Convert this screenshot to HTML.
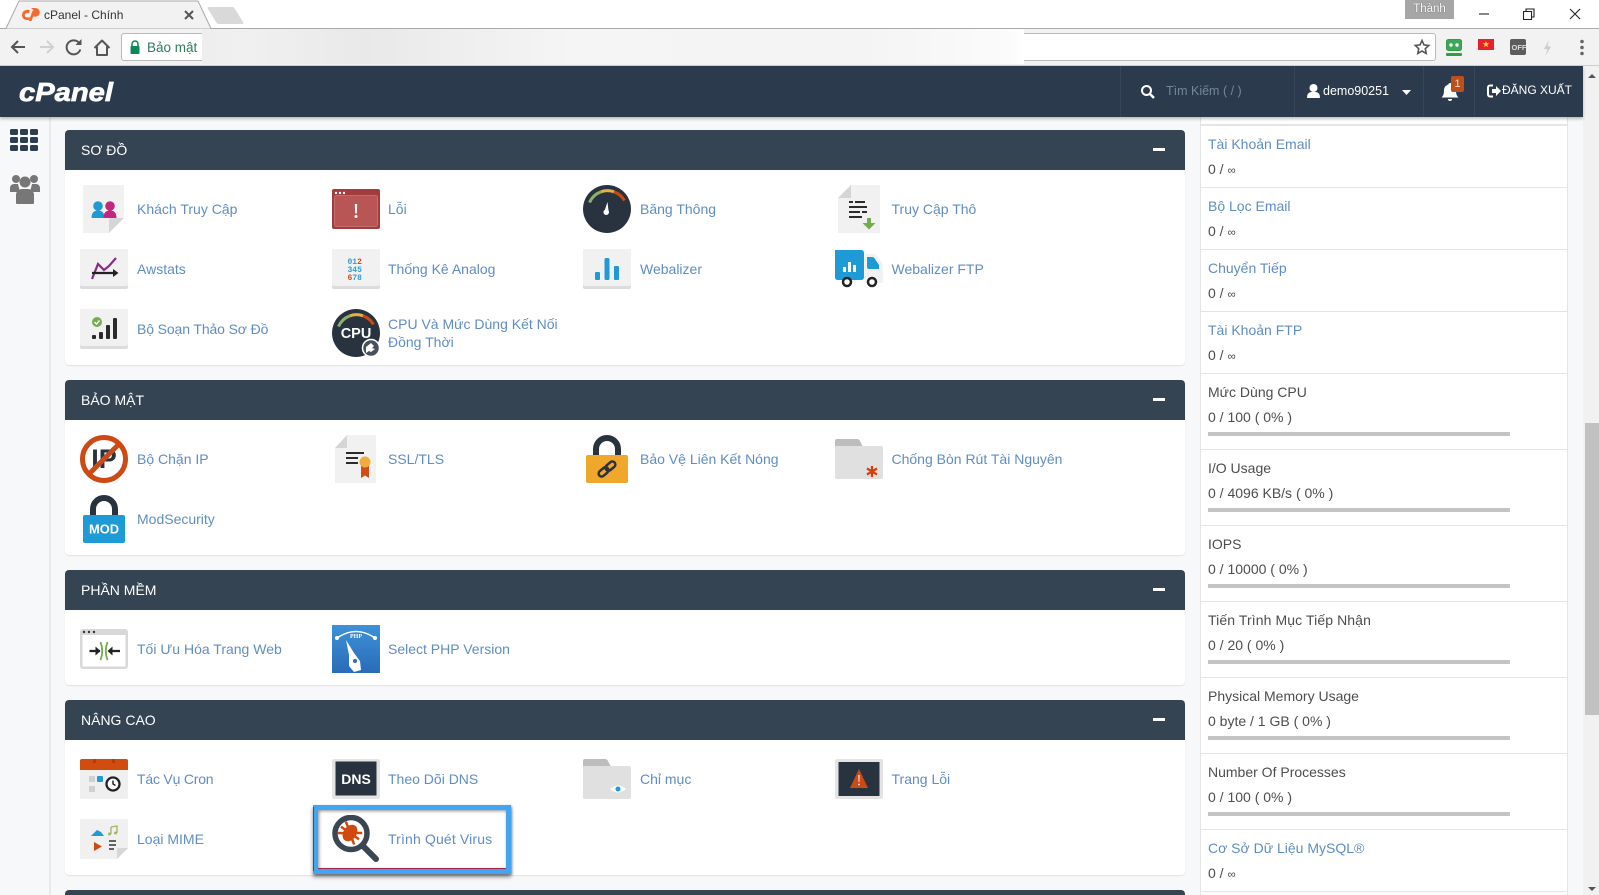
<!DOCTYPE html>
<html lang="vi"><head><meta charset="utf-8"><title>cPanel - Chính</title>
<style>
html,body{margin:0;padding:0;width:1599px;height:895px;overflow:hidden;background:#f7f8f9;font-family:"Liberation Sans","Noto Sans CJK SC",sans-serif;font-size:14px;color:#444}
#w{position:relative;width:1599px;height:895px;overflow:hidden}
.a{position:absolute}
.p{position:absolute;left:65px;width:1119.5px;background:#fff;border-radius:4px;box-shadow:0 1px 1px #dfe1e3}
.h{position:absolute;left:65px;width:1119.5px;height:40px;background:#344452;border-radius:4px 4px 0 0;color:#fff;line-height:40px;text-indent:16px;font-size:14px}
.m{position:absolute;left:1153px;width:12px;height:3px;background:#fff}
.t{position:absolute;color:#5f8dc3;line-height:20px;white-space:nowrap}
.i{position:absolute;width:48px;height:48px;display:block}
.l{position:absolute;left:1208px;line-height:20px;white-space:nowrap;color:#4d4d4d}
.l s{text-decoration:none;font-size:11.500px}
.k{color:#5f8dc3}
.b{position:absolute;left:1208px;width:302px;height:4px;background:#c4c4c4}
</style></head><body><div id="w">

<!-- browser chrome -->
<div class="a" style="left:0;top:0;width:1599px;height:29px;background:#fff"></div>
<div class="a" style="left:0;top:28px;width:1599px;height:1px;background:#a9a9a9"></div>
<div class="a" style="left:0;top:29px;width:1599px;height:37px;background:#f2f2f2;border-bottom:1px solid #cfcfcf;box-sizing:border-box"></div>
<svg class="a" style="left:0;top:0" width="250" height="30">
<path d="M0 28.500H6L19 1H198L211 28.500" fill="#f2f2f2" stroke="#a9a9a9" stroke-width="1"/>
<path d="M209 7h23q2 0 3 2l8 13q1 2-1 2h-23q-2 0-3-2l-8-13q-1-2 1-2z" fill="#d9d9d9"/>
<g fill="#f26b2e"><path d="M30 10.500a5 5 0 0 0-4-.5 5.200 5.200 0 0 0-4 5 4.800 4.800 0 0 0 5 5h2l1-2.600h-3a2.200 2.200 0 0 1 0-4.400h2z"/><path d="M31 8h4.500a4.300 4.300 0 0 1 0 8.600H33l-1.500 4.400h-2.800l4-10.500h2.800a1.700 1.700 0 0 1 0 3.400h-2l1-2.900z"/></g>
<path d="M185 11l8 8M193 11l-8 8" stroke="#555" stroke-width="2" fill="none"/>
</svg>
<div class="a" style="left:44px;top:8px;font-size:12px;line-height:15px;color:#333">cPanel - Chính</div>

<svg class="a" style="left:0;top:29px" width="125" height="37" fill="none">
<path d="M25 18H13M18 12l-6 6 6 6" stroke="#555" stroke-width="2"/>
<path d="M40 18h12M47 12l6 6-6 6" stroke="#d0d0d0" stroke-width="2"/>
<path d="M79.500 14.500a7 7 0 1 0 .8 6" stroke="#555" stroke-width="2"/><path d="M81.500 10v6h-6z" fill="#555"/>
<path d="M94.500 19L102 11.500 109.500 19M97 17.500V26h10v-8.500" stroke="#555" stroke-width="2" stroke-linejoin="round"/>
</svg>
<div class="a" style="left:121px;top:33px;width:1315px;height:28px;background:#fff;border:1px solid #b9b9b9;border-radius:3px;box-sizing:border-box"></div>
<svg class="a" style="left:129px;top:40px" width="12" height="14"><path d="M3 6V4a3 3 0 0 1 6 0v2" stroke="#0b8a55" stroke-width="1.500" fill="none"/><rect x="1.500" y="6" width="9" height="8" rx="1" fill="#0b8a55"/></svg>
<div class="a" style="left:147px;top:39px;font-size:13.500px;line-height:17px;color:#2e7d5b">Bảo mật</div>
<div class="a" style="left:202px;top:29px;width:822px;height:35px;background:linear-gradient(90deg,#eee 0,#f0f0f0 5%,#e9e9e9 20%,#f5f5f5 45%,#f4f4f4 80%,#fbfbfb 98%,#fff 100%)"></div>
<svg class="a" style="left:1412px;top:37px" width="20" height="20"><path d="M10 3.500l2 4.400 4.700.6-3.400 3.200.9 4.800L10 14.100l-4.200 2.400.9-4.800L3.300 8.500 8 7.900z" fill="none" stroke="#555" stroke-width="1.600"/></svg>
<svg class="a" style="left:1445px;top:38px" width="140" height="20">
<rect x="1.500" y="1.500" width="15" height="11" rx="2" fill="#3aa856" stroke="#2f9e44"/><rect x="1" y="15" width="16" height="3" rx="1" fill="#2f9e44"/><circle cx="6" cy="7" r="1.700" fill="#fff"/><circle cx="12" cy="7" r="1.700" fill="#fff"/>
<rect x="33" y="1" width="16" height="11" fill="#e8202a"/><path d="M41 3l.9 2.300h2.300l-1.900 1.500.7 2.300-2-1.400-2 1.400.7-2.300-1.900-1.500h2.300z" fill="#ffdc3d"/>
<rect x="65" y="1" width="16" height="16" rx="2" fill="#5c5c5c"/><text x="66.500" y="12" font-size="7.500" font-weight="700" fill="#ddd" font-family="Liberation Sans">OFF</text>
<path d="M104 2l-5 9h3.500l-2 7 5.500-9.500h-3.500z" fill="#ccc"/>
<g fill="#666"><circle cx="137" cy="3.500" r="1.800"/><circle cx="137" cy="9.500" r="1.800"/><circle cx="137" cy="15.500" r="1.800"/></g>
</svg>
<div class="a" style="left:1405px;top:0;width:49px;height:19px;background:#a6a6a6;color:#fff;font-size:11.500px;line-height:18px;text-align:center;text-shadow:0 0 1px #444">Thành</div>
<svg class="a" style="left:1478px;top:6px" width="110" height="16" fill="none" stroke="#222" stroke-width="1.100">
<path d="M1 8h10"/><path d="M45.500 5.500h8v8h-8zM48 5.500V3h8v8h-2.500"/><path d="M92 3l10 10M102 3L92 13"/>
</svg>

<!-- main background -->
<div class="a" style="left:0;top:117px;width:49px;height:778px;background:#f7f8f9;border-right:2px solid #e9eaeb"></div>
<svg class="a" style="left:9px;top:128px" width="32" height="78">
<g fill="#2c3e50"><rect x="1" y="1" width="8" height="6" rx="1.500"/><rect x="11" y="1" width="8" height="6" rx="1.500"/><rect x="21" y="1" width="8" height="6" rx="1.500"/><rect x="1" y="9" width="8" height="6" rx="1.500"/><rect x="11" y="9" width="8" height="6" rx="1.500"/><rect x="21" y="9" width="8" height="6" rx="1.500"/><rect x="1" y="17" width="8" height="6" rx="1.500"/><rect x="11" y="17" width="8" height="6" rx="1.500"/><rect x="21" y="17" width="8" height="6" rx="1.500"/></g>
<g fill="#777"><circle cx="7" cy="51" r="4"/><circle cx="25" cy="51" r="4"/><path d="M1 64v-4a4 4 0 0 1 4-4h4l2 8zM31 64v-4a4 4 0 0 0-4-4h-4l-2 8z"/><circle cx="16" cy="54" r="5.500"/><path d="M7 75v-8a6 6 0 0 1 6-6h6a6 6 0 0 1 6 6v8q0 1-1 1H8q-1 0-1-1z"/></g>
</svg>

<!-- panels -->
<div class="p" style="top:130px;height:235px"></div>
<div class="h" style="top:130px">SƠ ĐỒ</div><div class="m" style="top:148px"></div>
<div class="p" style="top:380px;height:175px"></div>
<div class="h" style="top:380px">BẢO MẬT</div><div class="m" style="top:398px"></div>
<div class="p" style="top:570px;height:115px"></div>
<div class="h" style="top:570px">PHẦN MỀM</div><div class="m" style="top:588px"></div>
<div class="p" style="top:700px;height:175px"></div>
<div class="h" style="top:700px">NÂNG CAO</div><div class="m" style="top:718px"></div>
<div class="h" style="top:890px;height:5px"></div>

<!-- SO DO row 1 -->
<svg class="i" style="left:80px;top:185px" viewBox="0 0 48 48"><path d="M3 0h41v33L29 48H3z" fill="#f1f1f1"/><path d="M44 33H31q-2 0-2 2v13z" fill="#d6d6d6"/><circle cx="18" cy="21" r="4.800" fill="#1e9ad6"/><path d="M11.500 33q0-7.500 6.500-7.500t6.500 7.500z" fill="#1e9ad6"/><circle cx="30" cy="21" r="4.800" fill="#c2267e"/><path d="M23.500 33q0-7.500 6.500-7.500T36.500 33z" fill="#c2267e"/></svg>
<div class="t" style="left:137px;top:199px">Khách Truy Cập</div>
<svg class="i" style="left:332px;top:185px" viewBox="0 0 48 48"><rect y="4" width="48" height="40" rx="2" fill="#a33c3c"/><rect x="2.500" y="10.500" width="43" height="31" rx="2" fill="#b85555" stroke="#c97a7a" stroke-width=".8"/><g fill="#fff"><circle cx="4" cy="8" r="1.200"/><circle cx="8" cy="8" r="1.200"/><circle cx="12" cy="8" r="1.200"/><path d="M22.800 19h2.400l-.4 9.500h-1.600z"/><circle cx="24" cy="31.500" r="1.500"/></g></svg>
<div class="t" style="left:388px;top:199px">Lỗi</div>
<svg class="i" style="left:583px;top:185px" viewBox="0 0 48 48"><circle cx="24" cy="24" r="24" fill="#29333f"/><path d="M6.500 17.500A20 20 0 0 1 18 6.800" fill="none" stroke="#8db06a" stroke-width="3"/><path d="M18 6.800A20 20 0 0 1 31 6.800" fill="none" stroke="#e5b04a" stroke-width="3"/><path d="M31 6.800A20 20 0 0 1 41.500 15.500" fill="none" stroke="#cb4a13" stroke-width="3"/><path d="M24.500 17l1 8.500a2.800 2.800 0 1 1-3.600-.8z" fill="#fff"/></svg>
<div class="t" style="left:640px;top:199px">Băng Thông</div>
<svg class="i" style="left:835px;top:185px" viewBox="0 0 48 48"><path d="M16 0h29v48H3V13z" fill="#f1f1f1"/><path d="M16 0v13H3z" fill="#d5d5d5"/><g fill="#2b2b2b"><rect x="14" y="16" width="4" height="2"/><rect x="20" y="16" width="10" height="2"/><rect x="14" y="21" width="18" height="2"/><rect x="14" y="26" width="11" height="2"/><rect x="27" y="26" width="5" height="2"/><rect x="14" y="31" width="13" height="2"/></g><path d="M32 33h4v5h4.500L34 44.500 27.500 38H32z" fill="#74ad4e"/></svg>
<div class="t" style="left:891.500px;top:199px">Truy Cập Thô</div>

<!-- row 2 -->
<svg class="i" style="left:80px;top:245px" viewBox="0 0 48 48"><rect y="4" width="48" height="40" rx="2" fill="#dcdcdc"/><rect y="4" width="48" height="37" rx="2" fill="#f1f1f1"/><path d="M12 34l6-15 6 6 5-4 7-8" fill="none" stroke="#8c2a8c" stroke-width="2.200"/><path d="M12 28h22" stroke="#222" stroke-width="2.200"/><path d="M33 24l5.500 4-5.500 4z" fill="#222"/></svg>
<div class="t" style="left:137px;top:259px">Awstats</div>
<svg class="i" style="left:332px;top:245px" viewBox="0 0 48 48"><rect y="4" width="48" height="40" rx="2" fill="#dcdcdc"/><rect y="4" width="48" height="37" rx="2" fill="#f1f1f1"/><g font-family="Liberation Mono" font-size="8" font-weight="700"><text x="15.500" y="19" fill="#2a9fd6">01<tspan fill="#cc4a14">2</tspan></text><text x="15.500" y="27" fill="#2a9fd6">345</text><text x="15.500" y="35" fill="#cc4a14">6<tspan fill="#2a9fd6">78</tspan></text></g></svg>
<div class="t" style="left:388px;top:259px">Thống Kê Analog</div>
<svg class="i" style="left:583px;top:245px" viewBox="0 0 48 48"><rect y="4" width="48" height="40" rx="2" fill="#dcdcdc"/><rect y="4" width="48" height="37" rx="2" fill="#f1f1f1"/><g fill="#1f9ad6"><rect x="12" y="27" width="5" height="8" rx="1"/><rect x="21.500" y="13" width="5" height="22" rx="1.500"/><rect x="31" y="21" width="5" height="14" rx="1"/></g></svg>
<div class="t" style="left:640px;top:259px">Webalizer</div>
<svg class="i" style="left:835px;top:245px" viewBox="0 0 48 48"><path d="M30 9h9q2 0 3 2l5 7q1 2 1 4v14q0 2-2 2H30z" fill="#f1f1f1"/><path d="M0 5h26q3 0 3 3v24q0 3-3 3H3q-3 0-3-3z" fill="#1e9ad6"/><path d="M32 12h5q2 0 3 2l4 6v4H34q-2 0-2-2z" fill="#1e9ad6"/><g fill="#fff"><rect x="8" y="22" width="3" height="5"/><rect x="13" y="17" width="3" height="10"/><rect x="18" y="20" width="3" height="7"/></g><g fill="#fff" stroke="#222" stroke-width="2.500"><circle cx="12" cy="37" r="4"/><circle cx="37" cy="37" r="4"/></g></svg>
<div class="t" style="left:891.500px;top:259px">Webalizer FTP</div>

<!-- row 3 -->
<svg class="i" style="left:80px;top:305px" viewBox="0 0 48 48"><rect y="4" width="48" height="40" rx="2" fill="#dcdcdc"/><rect y="4" width="48" height="37" rx="2" fill="#f1f1f1"/><g fill="#2b2b2b"><rect x="12" y="30" width="4" height="4" rx="1"/><rect x="19" y="27" width="4" height="7" rx="1"/><rect x="26" y="20" width="4" height="14" rx="1"/><rect x="33" y="13" width="4" height="21" rx="1"/></g><circle cx="17" cy="17" r="5" fill="#74ad4e"/><path d="M14.500 17l2 2 3-3.500" fill="none" stroke="#fff" stroke-width="1.400"/></svg>
<div class="t" style="left:137px;top:319px;letter-spacing:-.12px">Bộ Soạn Thảo Sơ Đồ</div>
<svg class="i" style="left:332px;top:309px" viewBox="0 0 48 48"><circle cx="24" cy="24" r="24" fill="#29333f"/><path d="M6.500 17.500A20 20 0 0 1 18 6.800" fill="none" stroke="#8db06a" stroke-width="3"/><path d="M18 6.800A20 20 0 0 1 31 6.800" fill="none" stroke="#e5b04a" stroke-width="3"/><path d="M31 6.800A20 20 0 0 1 41.500 15.500" fill="none" stroke="#cb4a13" stroke-width="3"/><text x="24" y="29" text-anchor="middle" font-family="Liberation Sans" font-size="14.500" font-weight="700" fill="#fff">CPU</text><circle cx="39" cy="39" r="8.500" fill="#47515c" stroke="#fff" stroke-width="1.500"/><path d="M34 38l5-4 3 3-2 2 3 1-4 3-2-1-3 2z" fill="#fff"/></svg>
<div class="t" style="left:388px;top:314px">CPU Và Mức Dùng Kết Nối</div>
<div class="t" style="left:388px;top:332px">Đồng Thời</div>

<!-- BAO MAT -->
<svg class="i" style="left:80px;top:435px" viewBox="0 0 48 48"><text x="24" y="33" text-anchor="middle" font-family="Liberation Sans" font-size="27" font-weight="700" fill="#29333f">IP</text><circle cx="24" cy="24" r="21.500" fill="none" stroke="#cc4a14" stroke-width="5"/><path d="M39 9L9 39" stroke="#cc4a14" stroke-width="5"/></svg>
<div class="t" style="left:137px;top:449px">Bộ Chặn IP</div>
<svg class="i" style="left:332px;top:435px" viewBox="0 0 48 48"><path d="M15 0h29v48H3V13z" fill="#f1f1f1"/><path d="M15 0v13H3z" fill="#d5d5d5"/><g fill="#2b2b2b"><rect x="14" y="17" width="18" height="2"/><rect x="14" y="22" width="12" height="2"/><rect x="14" y="27" width="12" height="2"/></g><path d="M29 29v14l4-2.500 4 2.500V29z" fill="#d24c17"/><circle cx="33" cy="27" r="5.500" fill="#f0ad3c"/></svg>
<div class="t" style="left:388px;top:449px">SSL/TLS</div>
<svg class="i" style="left:583px;top:435px" viewBox="0 0 48 48"><path d="M13 22V14a11 11 0 0 1 22 0v8" fill="none" stroke="#29333f" stroke-width="6"/><rect x="3" y="20" width="42" height="28" rx="2" fill="#f0a82b"/><g fill="none" stroke="#29333f" stroke-width="2.500" transform="rotate(-40 24 34)"><rect x="14" y="31" width="11" height="6" rx="3"/><rect x="23" y="31" width="11" height="6" rx="3"/></g></svg>
<div class="t" style="left:640px;top:449px">Bảo Vệ Liên Kết Nóng</div>
<svg class="i" style="left:835px;top:435px" viewBox="0 0 48 48"><path d="M0 6q0-2 2-2h20q2 0 3 2l3 6H0z" fill="#bdbdbd"/><path d="M0 11h46q2 0 2 2v29q0 2-2 2H2q-2 0-2-2z" fill="#e0e0e0"/><path d="M37 31v11M32 33.500l10 6M42 33.500l-10 6" stroke="#d2410f" stroke-width="2.300"/></svg>
<div class="t" style="left:891.500px;top:449px">Chống Bòn Rút Tài Nguyên</div>
<svg class="i" style="left:80px;top:495px" viewBox="0 0 48 48"><path d="M13 22V14a11 11 0 0 1 22 0v8" fill="none" stroke="#29333f" stroke-width="6"/><rect x="3" y="20" width="42" height="28" rx="2" fill="#1e9ad6"/><text x="9" y="38.500" font-family="Liberation Sans" font-size="12.500" font-weight="700" fill="#fff" textLength="30" lengthAdjust="spacingAndGlyphs">MOD</text></svg>
<div class="t" style="left:137px;top:509px">ModSecurity</div>

<!-- PHAN MEM -->
<svg class="i" style="left:80px;top:625px" viewBox="0 0 48 48"><rect y="4" width="48" height="40" rx="3" fill="#d8d8d8"/><rect x="2.500" y="10" width="43" height="31.500" fill="#fff"/><g fill="#333"><circle cx="4" cy="7" r="1.200"/><circle cx="9" cy="7" r="1.200"/><circle cx="14" cy="7" r="1.200"/></g><path d="M9.500 26H20M31 26h9" stroke="#222" stroke-width="2.200"/><path d="M15.500 21.500l5 4.500-5 4.500zM32.500 21.500l-5 4.500 5 4.500z" fill="#222"/><path d="M20.500 17q3.500 9 0 18M27.500 17q-3.500 9 0 18" fill="none" stroke="#74ad4e" stroke-width="1.800"/></svg>
<div class="t" style="left:137px;top:639px">Tối Ưu Hóa Trang Web</div>
<svg class="i" style="left:332px;top:625px" viewBox="0 0 48 48"><defs><linearGradient id="g" x1="0" y1="0" x2="0" y2="1"><stop offset="0" stop-color="#3d92d8"/><stop offset="1" stop-color="#2a6bb8"/></linearGradient></defs><rect width="48" height="48" fill="url(#g)"/><path d="M5 13q19-13 38 0" fill="none" stroke="#fff" stroke-width="1.500"/><circle cx="5" cy="13" r="2" fill="#fff"/><circle cx="43" cy="13" r="2" fill="#fff"/><text x="24" y="13" text-anchor="middle" font-family="Liberation Serif" font-size="6" font-weight="700" fill="#fff">PHP</text><path d="M14 15l8 13 6 8 1 9-7 2-5-6v-11z" fill="#fff"/><circle cx="23" cy="36" r="2" fill="#2a6bb8"/></svg>
<div class="t" style="left:388px;top:639px">Select PHP Version</div>

<!-- NANG CAO -->
<svg class="i" style="left:80px;top:755px" viewBox="0 0 48 48"><rect y="4" width="48" height="40" rx="2" fill="#efefef"/><path d="M0 15V6q0-2 2-2h44q2 0 2 2v9z" fill="#d24c0f"/><g fill="#b23c0a"><rect x="13" y="4" width="3" height="4"/><rect x="32" y="4" width="3" height="4"/></g><g fill="#d0d0d0"><rect x="9" y="21" width="6" height="6"/><rect x="9" y="31" width="6" height="6"/></g><rect x="17" y="21" width="6" height="6" rx="1" fill="#1f9ad6"/><circle cx="33" cy="29" r="6.500" fill="#fff" stroke="#222" stroke-width="2.300"/><path d="M33 25.500V29l2.500 1.500" fill="none" stroke="#222" stroke-width="1.500"/></svg>
<div class="t" style="left:137px;top:769px;letter-spacing:-.2px">Tác Vụ Cron</div>
<svg class="i" style="left:332px;top:755px" viewBox="0 0 48 48"><rect y="4" width="48" height="40" rx="2" fill="#e4e4e4"/><rect x="3.500" y="6.500" width="41" height="34" fill="#29333f"/><text x="24" y="29" text-anchor="middle" font-family="Liberation Sans" font-size="14" font-weight="700" fill="#fff">DNS</text></svg>
<div class="t" style="left:388px;top:769px">Theo Dõi DNS</div>
<svg class="i" style="left:583px;top:755px" viewBox="0 0 48 48"><path d="M0 6q0-2 2-2h20q2 0 3 2l3 6H0z" fill="#bdbdbd"/><path d="M0 11h46q2 0 2 2v29q0 2-2 2H2q-2 0-2-2z" fill="#e0e0e0"/><path d="M27 34q8-7 16 0-8 7-16 0z" fill="#fff"/><circle cx="35" cy="34" r="2.500" fill="#1f9ad6"/></svg>
<div class="t" style="left:640px;top:769px">Chỉ mục</div>
<svg class="i" style="left:835px;top:755px" viewBox="0 0 48 48"><rect y="4" width="48" height="40" rx="2" fill="#e4e4e4"/><rect x="3.500" y="7" width="41" height="34" fill="#29333f"/><path d="M24 14l9 19H15z" fill="#cc4a14"/><path d="M23.400 20h1.200l-.2 7h-.8z" fill="#fff"/><circle cx="24" cy="29.500" r=".9" fill="#fff"/></svg>
<div class="t" style="left:891.500px;top:769px">Trang Lỗi</div>
<svg class="i" style="left:80px;top:815px" viewBox="0 0 48 48"><path d="M0 4h48v29L37 44H2q-2 0-2-2z" fill="#f0f0f0"/><path d="M48 33H39q-2 0-2 2v9z" fill="#d6d6d6"/><path d="M11 21l6-6 4 2 3 4z" fill="#1f9ad6"/><path d="M31 12v7M31 12l6-1v7" fill="none" stroke="#a4b75c" stroke-width="1.300"/><circle cx="29.500" cy="19" r="1.500" fill="#a4b75c"/><circle cx="35.500" cy="18" r="1.500" fill="#a4b75c"/><path d="M14 27l8 4.500-8 4.500z" fill="#cc4a14"/><path d="M29 26h7M29 30h7M29 34h5" stroke="#333" stroke-width="1.500"/></svg>
<div class="t" style="left:137px;top:829px">Loại MIME</div>

<!-- highlight -->
<div class="a" style="left:313px;top:805px;width:198px;height:69px;box-sizing:border-box;border:5px solid #42a5f2;background:transparent;box-shadow:0 3px 4px rgba(0,0,0,.45),1px 1px 2px rgba(0,0,0,.3),inset 1px 1px 3px rgba(0,0,0,.45)"></div>
<div class="a" style="left:313px;top:807px;width:1px;height:64px;background:#a9224a"></div>
<div class="a" style="left:318px;top:868px;width:188px;height:1px;background:#a9224a"></div>
<svg class="i" style="left:332px;top:815px" viewBox="0 0 48 48"><circle cx="19" cy="18.500" r="16" fill="#fff" stroke="#3a4753" stroke-width="5.500"/><path d="M32 32l12 12" stroke="#3a4753" stroke-width="6" stroke-linecap="round"/><g transform="rotate(35 18 18)"><ellipse cx="18" cy="18" rx="6.500" ry="9" fill="#d2490f"/><path d="M8 11l6 4M8 25l6-4M28 11l-6 4M28 25l-6-4M7 18h6M29 18h-6" stroke="#d2490f" stroke-width="2.500"/></g></svg>
<div class="t" style="left:388px;top:829px;letter-spacing:.15px">Trình Quét Virus</div>

<!-- right column -->
<div class="a" style="left:1200px;top:117px;width:368px;height:778px;background:#fff;border:solid #e3e4e5;border-width:0 1px;box-sizing:border-box"></div>
<div class="a" style="left:1200px;top:124px;width:368px;height:2px;background:#e3e4e5"></div>
<div class="a" style="left:1200px;top:186.500px;width:368px;height:1.500px;background:#e3e4e5"></div>
<div class="a" style="left:1200px;top:248.500px;width:368px;height:1.500px;background:#e3e4e5"></div>
<div class="a" style="left:1200px;top:310.500px;width:368px;height:1.500px;background:#e3e4e5"></div>
<div class="a" style="left:1200px;top:372.500px;width:368px;height:1.500px;background:#e3e4e5"></div>
<div class="a" style="left:1200px;top:448.500px;width:368px;height:1.500px;background:#e3e4e5"></div>
<div class="a" style="left:1200px;top:524.500px;width:368px;height:1.500px;background:#e3e4e5"></div>
<div class="a" style="left:1200px;top:600.500px;width:368px;height:1.500px;background:#e3e4e5"></div>
<div class="a" style="left:1200px;top:676.500px;width:368px;height:1.500px;background:#e3e4e5"></div>
<div class="a" style="left:1200px;top:752.500px;width:368px;height:1.500px;background:#e3e4e5"></div>
<div class="a" style="left:1200px;top:828.500px;width:368px;height:1.500px;background:#e3e4e5"></div>
<div class="a" style="left:1200px;top:890.500px;width:368px;height:1.500px;background:#e3e4e5"></div>

<div class="l k" style="top:134px">Tài Khoản Email</div><div class="l" style="top:159px">0 / <s>∞</s></div>
<div class="l k" style="top:196px">Bộ Lọc Email</div><div class="l" style="top:221px">0 / <s>∞</s></div>
<div class="l k" style="top:258px">Chuyển Tiếp</div><div class="l" style="top:283px">0 / <s>∞</s></div>
<div class="l k" style="top:320px">Tài Khoản FTP</div><div class="l" style="top:345px">0 / <s>∞</s></div>
<div class="l" style="top:382px">Mức Dùng CPU</div><div class="l" style="top:407px">0 / 100 ( 0% )</div><div class="b" style="top:432px"></div>
<div class="l" style="top:458px">I/O Usage</div><div class="l" style="top:483px">0 / 4096 KB/s ( 0% )</div><div class="b" style="top:508px"></div>
<div class="l" style="top:534px">IOPS</div><div class="l" style="top:559px">0 / 10000 ( 0% )</div><div class="b" style="top:584px"></div>
<div class="l" style="top:610px;letter-spacing:.1px">Tiến Trình Mục Tiếp Nhận</div><div class="l" style="top:635px">0 / 20 ( 0% )</div><div class="b" style="top:660px"></div>
<div class="l" style="top:686px">Physical Memory Usage</div><div class="l" style="top:711px">0 byte / 1 GB ( 0% )</div><div class="b" style="top:736px"></div>
<div class="l" style="top:762px">Number Of Processes</div><div class="l" style="top:787px">0 / 100 ( 0% )</div><div class="b" style="top:812px"></div>
<div class="l k" style="top:838px">Cơ Sở Dữ Liệu MySQL®</div><div class="l" style="top:863px">0 / <s>∞</s></div>

<!-- scrollbar -->
<div class="a" style="left:1583px;top:66px;width:16px;height:829px;background:#f1f1f1"></div>
<div class="a" style="left:1585px;top:423px;width:14px;height:292px;background:#c1c1c1"></div>
<svg class="a" style="left:1583px;top:66px" width="16" height="829"><path d="M5 12l4-4 4 4z" fill="#555"/><path d="M5 821l4 4 4-4z" fill="#555"/></svg>

<!-- navbar -->
<div class="a" style="left:0;top:66px;width:1583px;height:51px;background:#2b3b4d;box-shadow:0 2px 3px rgba(0,0,0,.25)"></div>
<div class="a" style="left:1120px;top:66px;width:1px;height:51px;background:#354658"></div>
<div class="a" style="left:1294px;top:66px;width:1px;height:51px;background:#354658"></div>
<div class="a" style="left:1423px;top:66px;width:1px;height:51px;background:#354658"></div>
<div class="a" style="left:1474px;top:66px;width:1px;height:51px;background:#354658"></div>
<svg class="a" style="left:18px;top:76px" width="100" height="30"><text x="1" y="25" font-family="Liberation Sans" font-size="26" font-weight="700" font-style="italic" fill="#fff" stroke="#fff" stroke-width=".7" textLength="94" lengthAdjust="spacingAndGlyphs">cPanel</text></svg>
<svg class="a" style="left:1140px;top:84px" width="16" height="16"><circle cx="6.500" cy="6.500" r="4.500" fill="none" stroke="#fff" stroke-width="2"/><path d="M10 10l4 4" stroke="#fff" stroke-width="2.400"/></svg>
<div class="a" style="left:1166px;top:81px;line-height:20px;font-size:12.500px;color:#76869a">Tìm Kiếm ( / )</div>
<svg class="a" style="left:1307px;top:83px" width="14" height="16"><circle cx="6.500" cy="5" r="4" fill="#fff"/><path d="M0 15q0-5.500 4-6h5q4 .5 4 6z" fill="#fff"/></svg>
<div class="a" style="left:1323px;top:81px;line-height:20px;font-size:12.500px;color:#fff">demo90251</div>
<svg class="a" style="left:1402px;top:90px" width="10" height="6"><path d="M0 0h9L4.500 5z" fill="#fff"/></svg>
<svg class="a" style="left:1441px;top:82px" width="18" height="20"><path d="M9 1a1.500 1.500 0 0 1 1.500 1.500c3 .8 4.500 3 4.500 6 0 4 1 5.500 2.500 7H.5C2 14 3 12.500 3 8.500c0-3 1.500-5.200 4.500-6A1.500 1.500 0 0 1 9 1z" fill="#fff"/><path d="M7 17h4a2 2 0 0 1-4 0z" fill="#fff"/></svg>
<div class="a" style="left:1451px;top:76px;width:13px;height:16px;background:#bd4f1c;border-radius:2px;color:#f5d8bd;font-size:11px;line-height:16px;text-align:center">1</div>
<svg class="a" style="left:1487px;top:84px" width="15" height="14"><path d="M6 1.500H3a2 2 0 0 0-2 2v7a2 2 0 0 0 2 2h3" fill="none" stroke="#fff" stroke-width="2"/><path d="M5 5h4V2l5 5-5 5V9H5z" fill="#fff"/></svg>
<div class="a" style="left:1502px;top:80px;line-height:20px;font-size:12px;color:#fff">ĐĂNG XUẤT</div>
</div></body></html>
